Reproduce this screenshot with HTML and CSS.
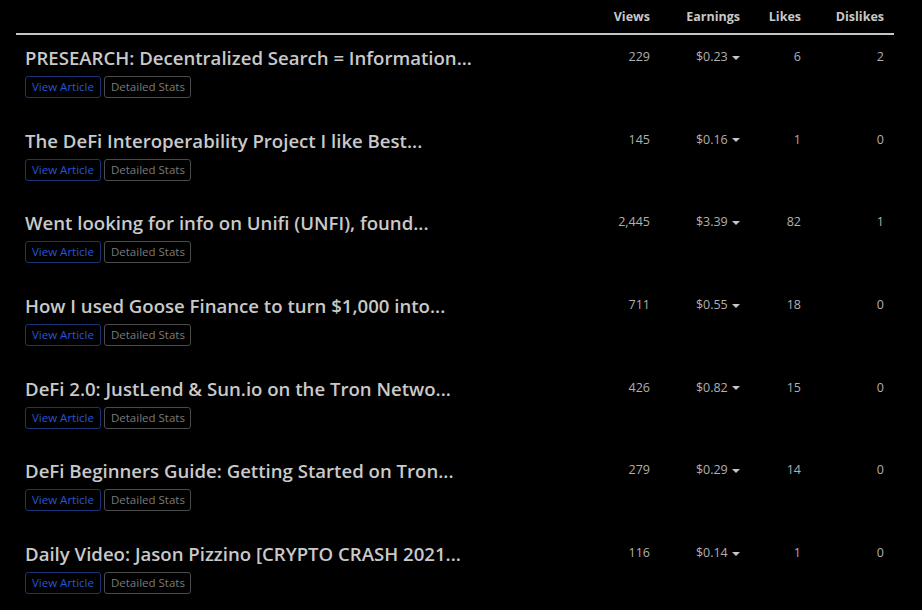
FILE: index.html
```html
<!DOCTYPE html>
<html lang="en">
<head>
    <meta charset="UTF-8">
    <title>My Articles</title>
    <link rel="stylesheet" href="styles.css">
</head>
<body>
    <div class="stats-table">
        <!-- Header -->
        <div class="row head">
            <div></div>
            <div class="num">Views</div>
            <div class="num">Earnings</div>
            <div class="num">Likes</div>
            <div class="num">Dislikes</div>
        </div>

        <div class="row article">
            <div class="title-cell">
                <div class="title">PRESEARCH: Decentralized Search = Information...</div>
                <div class="actions"><a class="btn btn-view" href="#">View Article</a><a class="btn btn-stats" href="#">Detailed Stats</a></div>
            </div>
            <div class="num">229</div>
            <div class="num earn">$0.23 <span class="caret"></span></div>
            <div class="num">6</div>
            <div class="num">2</div>
        </div>

        <div class="row article">
            <div class="title-cell">
                <div class="title">The DeFi Interoperability Project I like Best...</div>
                <div class="actions"><a class="btn btn-view" href="#">View Article</a><a class="btn btn-stats" href="#">Detailed Stats</a></div>
            </div>
            <div class="num">145</div>
            <div class="num earn">$0.16 <span class="caret"></span></div>
            <div class="num">1</div>
            <div class="num">0</div>
        </div>

        <div class="row article">
            <div class="title-cell">
                <div class="title">Went looking for info on Unifi (UNFI), found...</div>
                <div class="actions"><a class="btn btn-view" href="#">View Article</a><a class="btn btn-stats" href="#">Detailed Stats</a></div>
            </div>
            <div class="num">2,445</div>
            <div class="num earn">$3.39 <span class="caret"></span></div>
            <div class="num">82</div>
            <div class="num">1</div>
        </div>

        <div class="row article">
            <div class="title-cell">
                <div class="title">How I used Goose Finance to turn $1,000 into...</div>
                <div class="actions"><a class="btn btn-view" href="#">View Article</a><a class="btn btn-stats" href="#">Detailed Stats</a></div>
            </div>
            <div class="num">711</div>
            <div class="num earn">$0.55 <span class="caret"></span></div>
            <div class="num">18</div>
            <div class="num">0</div>
        </div>

        <div class="row article">
            <div class="title-cell">
                <div class="title">DeFi 2.0: JustLend &amp; Sun.io on the Tron Netwo...</div>
                <div class="actions"><a class="btn btn-view" href="#">View Article</a><a class="btn btn-stats" href="#">Detailed Stats</a></div>
            </div>
            <div class="num">426</div>
            <div class="num earn">$0.82 <span class="caret"></span></div>
            <div class="num">15</div>
            <div class="num">0</div>
        </div>

        <div class="row article">
            <div class="title-cell">
                <div class="title">DeFi Beginners Guide: Getting Started on Tron...</div>
                <div class="actions"><a class="btn btn-view" href="#">View Article</a><a class="btn btn-stats" href="#">Detailed Stats</a></div>
            </div>
            <div class="num">279</div>
            <div class="num earn">$0.29 <span class="caret"></span></div>
            <div class="num">14</div>
            <div class="num">0</div>
        </div>

        <div class="row article">
            <div class="title-cell">
                <div class="title">Daily Video: Jason Pizzino [CRYPTO CRASH 2021...</div>
                <div class="actions"><a class="btn btn-view" href="#">View Article</a><a class="btn btn-stats" href="#">Detailed Stats</a></div>
            </div>
            <div class="num">116</div>
            <div class="num earn">$0.14 <span class="caret"></span></div>
            <div class="num">1</div>
            <div class="num">0</div>
        </div>
    </div>
</body>
</html>
```

FILE: styles.css
```css
/* General Reset */
body, html {
    margin: 0;
    padding: 0;
    background-color: #000;
    color: #bdbdbd;
    font-family: 'Open Sans', 'Noto Sans', sans-serif;
}
.stats-table {
    margin-left: 16px;
    width: 878px;
}
.row {
    display: grid;
    grid-template-columns: 1fr 100px 90px 61px 83px;
}
.row .num {
    text-align: right;
    padding-right: 10px;
}
/* Header */
.head {
    height: 33px;
    align-items: center;
    border-bottom: 2px solid #c4c4c4;
    font-size: 12.5px;
    font-weight: 700;
    color: #c8c8c8;
}
/* Article rows */
.article {
    height: 82.7px;
    font-size: 12.5px;
}
.article .num {
    padding-top: 13px;
    color: #b0b0b0;
}
.title-cell {
    padding: 10px 0 0 9px;
}
.title {
    font-size: 18.6px;
    font-weight: 600;
    color: #c9c9c9;
    white-space: nowrap;
    line-height: 26px;
}
.actions {
    display: flex;
    gap: 3px;
    margin-top: 5px;
}
.btn {
    display: block;
    font-size: 11.5px;
    line-height: 20px;
    padding: 0 6px;
    border-radius: 3px;
    text-decoration: none;
}
.btn-view {
    color: #2656d6;
    border: 1px solid #1a3478;
}
.btn-stats {
    color: #7a7a7a;
    border: 1px solid #4a4a4a;
    padding: 0 5px 0 6px;
}
.caret {
    display: inline-block;
    width: 0;
    height: 0;
    border-left: 4px solid transparent;
    border-right: 4px solid transparent;
    border-top: 4px solid #c8c8c8;
    vertical-align: middle;
    margin-left: 1px;
}
```
